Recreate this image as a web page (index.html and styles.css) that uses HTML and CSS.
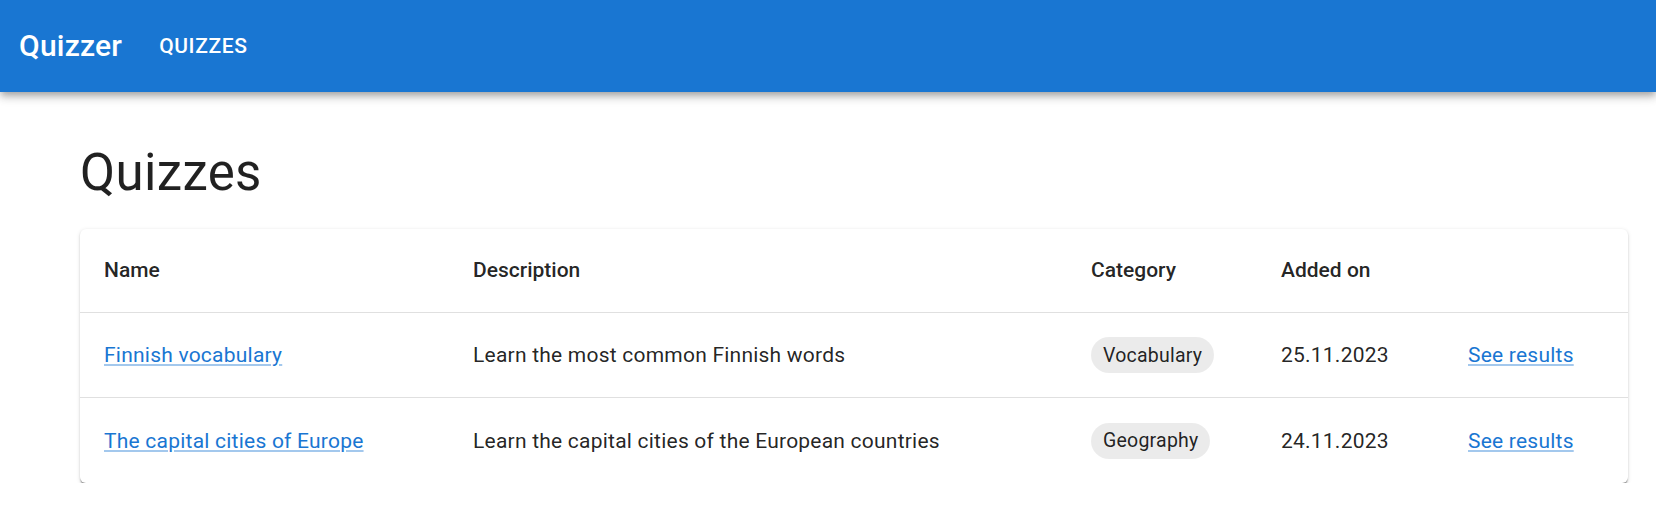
FILE: index.html
```html
<!DOCTYPE html>
<html lang="en">
<head>
<meta charset="utf-8">
<title>Quizzer</title>
<link rel="stylesheet" href="styles.css">
</head>
<body>
<header class="appbar">
  <div class="toolbar">
    <span class="brand">Quizzer</span>
    <a class="nav-button" href="#">Quizzes</a>
  </div>
</header>
<main class="container">
  <h1 class="page-title">Quizzes</h1>
  <div class="paper">
    <table class="table">
      <colgroup>
        <col class="col-name">
        <col class="col-desc">
        <col class="col-cat">
        <col class="col-date">
        <col class="col-action">
      </colgroup>
      <thead>
        <tr>
          <th>Name</th>
          <th>Description</th>
          <th>Category</th>
          <th>Added on</th>
          <th></th>
        </tr>
      </thead>
      <tbody>
        <tr>
          <td><a class="link" href="#">Finnish vocabulary</a></td>
          <td>Learn the most common Finnish words</td>
          <td><span class="chip">Vocabulary</span></td>
          <td>25.11.2023</td>
          <td><a class="link" href="#">See results</a></td>
        </tr>
        <tr>
          <td><a class="link" href="#">The capital cities of Europe</a></td>
          <td>Learn the capital cities of the European countries</td>
          <td><span class="chip">Geography</span></td>
          <td>24.11.2023</td>
          <td><a class="link" href="#">See results</a></td>
        </tr>
      </tbody>
    </table>
  </div>
</main>
</body>
</html>
```
FILE: styles.css
```css
* { box-sizing: border-box; }

html, body {
  margin: 0;
  padding: 0;
  background: #ffffff;
  font-family: Roboto, "Liberation Sans", Arial, sans-serif;
  color: rgba(0, 0, 0, 0.87);
}

.appbar {
  background: #1976d2;
  color: #ffffff;
  box-shadow: 0 3px 6px -1.5px rgba(0,0,0,0.2), 0 6px 7.5px 0 rgba(0,0,0,0.14), 0 1.5px 15px 0 rgba(0,0,0,0.12);
  position: relative;
  z-index: 2;
}

.toolbar {
  height: 92px;
  display: flex;
  align-items: center;
  padding: 0 19px;
}

.brand {
  font-size: 30px;
  font-weight: 500;
  line-height: 1.6;
  letter-spacing: 0.0075em;
}

.nav-button {
  margin-left: 25px;
  padding: 9px 12px;
  color: #ffffff;
  text-decoration: none;
  text-transform: uppercase;
  font-size: 21px;
  font-weight: 500;
  line-height: 1.75;
  letter-spacing: 0.02857em;
}

.container {
  padding: 0 28px 0 80px;
}

.page-title {
  margin: 50px 0 24px;
  font-size: 51px;
  font-weight: 400;
  line-height: 1.235;
  letter-spacing: 0.00735em;
}

.paper {
  background: #ffffff;
  border-radius: 6px;
  box-shadow: 0 3px 1.5px -1.5px rgba(0,0,0,0.25), 0 1.5px 1.5px 0 rgba(0,0,0,0.16), 0 1.5px 4.5px 0 rgba(0,0,0,0.12);
  overflow: hidden;
}

.table {
  width: 100%;
  border-collapse: collapse;
  table-layout: fixed;
}

.col-name { width: 369px; }
.col-desc { width: 618px; }
.col-cat { width: 190px; }
.col-date { width: 187px; }
.col-action { width: auto; }

.table th,
.table td {
  text-align: left;
  padding: 0 24px;
  font-size: 21px;
  vertical-align: middle;
  border-bottom: 1.5px solid #e0e0e0;
}

.table th {
  height: 84px;
  font-weight: 500;
  line-height: 1.5;
}

.table td {
  height: 85px;
  font-weight: 400;
  line-height: 1.43;
  letter-spacing: 0.01071em;
}

.table tbody tr:last-child td {
  border-bottom: none;
}

.link {
  color: #1976d2;
  text-decoration: underline;
  text-decoration-color: rgba(25, 118, 210, 0.4);
  text-underline-offset: 2px;
}

.chip {
  display: inline-flex;
  align-items: center;
  height: 36px;
  padding: 0 12px;
  border-radius: 18px;
  background: rgba(0, 0, 0, 0.08);
  font-size: 19.5px;
  color: rgba(0, 0, 0, 0.87);
}
```
